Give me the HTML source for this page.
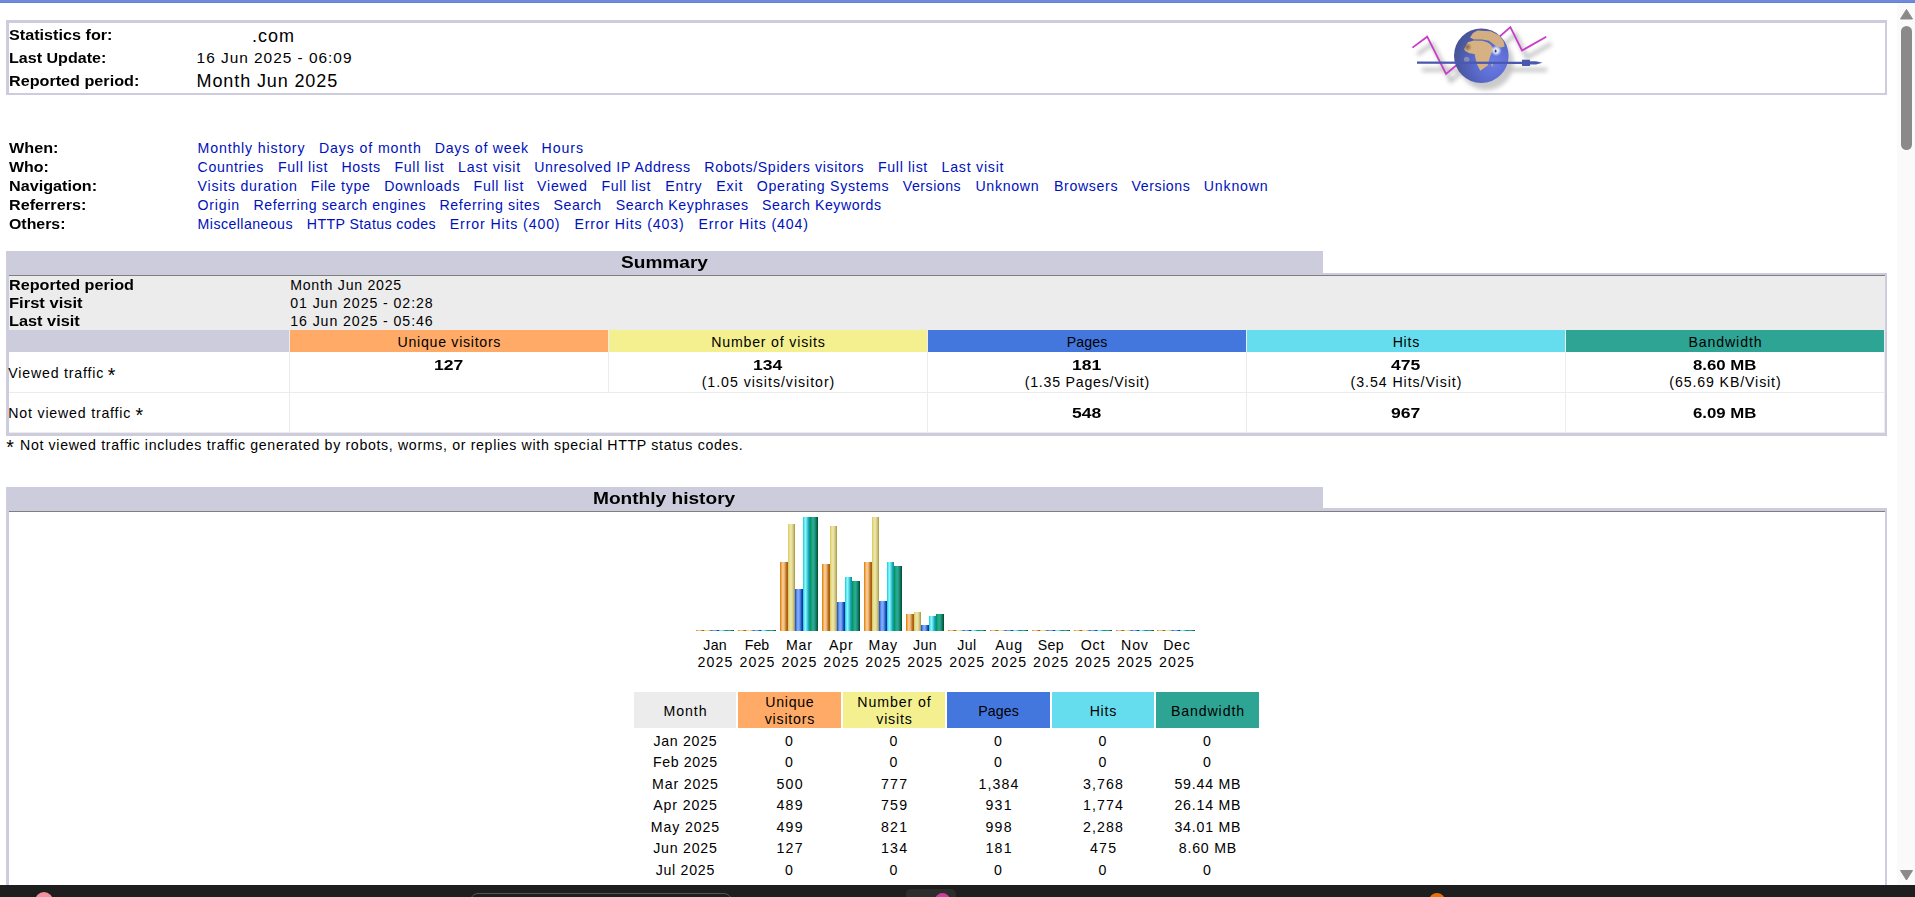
<!DOCTYPE html>
<html><head><meta charset="utf-8"><style>
html,body{margin:0;padding:0;}
body{width:1915px;height:897px;overflow:hidden;position:relative;background:#fff;font-family:"Liberation Sans", sans-serif;color:#000;}
.t{position:absolute;white-space:pre;line-height:0;font-family:"Liberation Sans", sans-serif;transform-origin:0 0;}
.r{position:absolute;}
.bar{position:absolute;}
.bu{background:linear-gradient(90deg,#d27a12 0%,#f2a850 18%,#fdd09a 35%,#eab878 55%,#c57d34 75%,#a45203 90%,#b8701e 100%);}
.bv{background:linear-gradient(90deg,#d6c85a 0%,#eee6a0 30%,#e8e0a4 50%,#d6ce8a 70%,#b4a44a 92%,#a89a48 100%);}
.bp{background:linear-gradient(90deg,#0c48d8 0%,#5a90f8 22%,#88b2ff 38%,#6c98e8 58%,#2a5cc8 78%,#0232a8 92%,#0c3aa0 100%);}
.bh{background:linear-gradient(90deg,#10c8d8 0%,#5cecf4 20%,#88f6fa 35%,#66d8e4 55%,#20b0bc 75%,#0c98a0 92%,#109aa2 100%);}
.bk{background:linear-gradient(90deg,#068a52 0%,#12a878 20%,#30ac98 40%,#249488 60%,#0a7a60 78%,#035a34 92%,#064a30 100%);}
</style></head><body>
<div class="r" style="left:6px;top:20px;width:1881px;height:75px;background:#ccccdd;"></div>
<div class="r" style="left:9px;top:23px;width:1876px;height:70px;background:#ffffff;"></div>
<div class="r" style="left:6px;top:251px;width:1317px;height:22px;background:#ccccdd;"></div>
<div class="r" style="left:6px;top:273px;width:1881px;height:163px;background:#ccccdd;"></div>
<div class="r" style="left:9px;top:275px;width:1876px;height:1px;background:#7f7f7f;"></div>
<div class="r" style="left:9px;top:276px;width:1876px;height:54px;background:#ececec;"></div>
<div class="r" style="left:9px;top:330px;width:1876px;height:103px;background:#ffffff;"></div>
<div class="r" style="left:9px;top:330px;width:280px;height:22px;background:#ccccdd;"></div>
<div class="r" style="left:290px;top:330px;width:318px;height:22px;background:#ffaa66;"></div>
<div class="r" style="left:609px;top:330px;width:318px;height:22px;background:#f4f090;"></div>
<div class="r" style="left:928px;top:330px;width:318px;height:22px;background:#4477dd;"></div>
<div class="r" style="left:1247px;top:330px;width:318px;height:22px;background:#66ddee;"></div>
<div class="r" style="left:1566px;top:330px;width:318px;height:22px;background:#2ea495;"></div>
<div class="r" style="left:9px;top:392px;width:1876px;height:1px;background:#ececec;"></div>
<div class="r" style="left:9px;top:432px;width:1876px;height:1px;background:#ececec;"></div>
<div class="r" style="left:289px;top:352px;width:1px;height:41px;background:#ececec;"></div>
<div class="r" style="left:608px;top:352px;width:1px;height:41px;background:#ececec;"></div>
<div class="r" style="left:927px;top:352px;width:1px;height:41px;background:#ececec;"></div>
<div class="r" style="left:1246px;top:352px;width:1px;height:41px;background:#ececec;"></div>
<div class="r" style="left:1565px;top:352px;width:1px;height:41px;background:#ececec;"></div>
<div class="r" style="left:1884px;top:352px;width:1px;height:41px;background:#ececec;"></div>
<div class="r" style="left:289px;top:393px;width:1px;height:40px;background:#ececec;"></div>
<div class="r" style="left:927px;top:393px;width:1px;height:40px;background:#ececec;"></div>
<div class="r" style="left:1246px;top:393px;width:1px;height:40px;background:#ececec;"></div>
<div class="r" style="left:1565px;top:393px;width:1px;height:40px;background:#ececec;"></div>
<div class="r" style="left:1884px;top:393px;width:1px;height:40px;background:#ececec;"></div>
<div class="r" style="left:289px;top:330px;width:1px;height:22px;background:#ececf0;"></div>
<div class="r" style="left:608px;top:330px;width:1px;height:22px;background:#ececf0;"></div>
<div class="r" style="left:927px;top:330px;width:1px;height:22px;background:#ececf0;"></div>
<div class="r" style="left:1246px;top:330px;width:1px;height:22px;background:#ececf0;"></div>
<div class="r" style="left:1565px;top:330px;width:1px;height:22px;background:#ececf0;"></div>
<div class="r" style="left:1884px;top:330px;width:1px;height:22px;background:#ececf0;"></div>
<div class="r" style="left:6px;top:487px;width:1317px;height:21px;background:#ccccdd;"></div>
<div class="r" style="left:6px;top:508px;width:1881px;height:389px;background:#ccccdd;"></div>
<div class="r" style="left:9px;top:511px;width:1876px;height:1px;background:#7f7f7f;"></div>
<div class="r" style="left:9px;top:512px;width:1876px;height:385px;background:#ffffff;"></div>
<div class="r" style="left:634px;top:692px;width:102px;height:36px;background:#ececec;"></div>
<div class="r" style="left:738px;top:692px;width:103px;height:36px;background:#ffaa66;"></div>
<div class="r" style="left:843px;top:692px;width:102px;height:36px;background:#f4f090;"></div>
<div class="r" style="left:947px;top:692px;width:103px;height:36px;background:#4477dd;"></div>
<div class="r" style="left:1052px;top:692px;width:102px;height:36px;background:#66ddee;"></div>
<div class="r" style="left:1156px;top:692px;width:103px;height:36px;background:#2ea495;"></div>
<div class="bar bu" style="left:696px;top:630px;width:8px;height:1px"></div>
<div class="bar bv" style="left:704px;top:630px;width:7px;height:1px"></div>
<div class="bar bp" style="left:711px;top:630px;width:8px;height:1px"></div>
<div class="bar bh" style="left:719px;top:630px;width:7px;height:1px"></div>
<div class="bar bk" style="left:726px;top:630px;width:8px;height:1px"></div>
<div class="bar bu" style="left:738px;top:630px;width:8px;height:1px"></div>
<div class="bar bv" style="left:746px;top:630px;width:7px;height:1px"></div>
<div class="bar bp" style="left:753px;top:630px;width:8px;height:1px"></div>
<div class="bar bh" style="left:761px;top:630px;width:7px;height:1px"></div>
<div class="bar bk" style="left:768px;top:630px;width:8px;height:1px"></div>
<div class="bar bu" style="left:780px;top:562px;width:8px;height:69px"></div>
<div class="bar bv" style="left:788px;top:524px;width:7px;height:107px"></div>
<div class="bar bp" style="left:795px;top:589px;width:8px;height:42px"></div>
<div class="bar bh" style="left:803px;top:517px;width:7px;height:114px"></div>
<div class="bar bk" style="left:810px;top:517px;width:8px;height:114px"></div>
<div class="bar bu" style="left:822px;top:564px;width:8px;height:67px"></div>
<div class="bar bv" style="left:830px;top:526px;width:7px;height:105px"></div>
<div class="bar bp" style="left:837px;top:602px;width:8px;height:29px"></div>
<div class="bar bh" style="left:845px;top:577px;width:7px;height:54px"></div>
<div class="bar bk" style="left:852px;top:581px;width:8px;height:50px"></div>
<div class="bar bu" style="left:864px;top:562px;width:8px;height:69px"></div>
<div class="bar bv" style="left:872px;top:517px;width:7px;height:114px"></div>
<div class="bar bp" style="left:879px;top:601px;width:8px;height:30px"></div>
<div class="bar bh" style="left:887px;top:562px;width:7px;height:69px"></div>
<div class="bar bk" style="left:894px;top:566px;width:8px;height:65px"></div>
<div class="bar bu" style="left:906px;top:614px;width:8px;height:17px"></div>
<div class="bar bv" style="left:914px;top:612px;width:7px;height:19px"></div>
<div class="bar bp" style="left:921px;top:625px;width:8px;height:6px"></div>
<div class="bar bh" style="left:929px;top:616px;width:7px;height:15px"></div>
<div class="bar bk" style="left:936px;top:614px;width:8px;height:17px"></div>
<div class="bar bu" style="left:948px;top:630px;width:8px;height:1px"></div>
<div class="bar bv" style="left:956px;top:630px;width:7px;height:1px"></div>
<div class="bar bp" style="left:963px;top:630px;width:8px;height:1px"></div>
<div class="bar bh" style="left:971px;top:630px;width:7px;height:1px"></div>
<div class="bar bk" style="left:978px;top:630px;width:8px;height:1px"></div>
<div class="bar bu" style="left:990px;top:630px;width:8px;height:1px"></div>
<div class="bar bv" style="left:998px;top:630px;width:7px;height:1px"></div>
<div class="bar bp" style="left:1005px;top:630px;width:8px;height:1px"></div>
<div class="bar bh" style="left:1013px;top:630px;width:7px;height:1px"></div>
<div class="bar bk" style="left:1020px;top:630px;width:8px;height:1px"></div>
<div class="bar bu" style="left:1032px;top:630px;width:8px;height:1px"></div>
<div class="bar bv" style="left:1040px;top:630px;width:7px;height:1px"></div>
<div class="bar bp" style="left:1047px;top:630px;width:8px;height:1px"></div>
<div class="bar bh" style="left:1055px;top:630px;width:7px;height:1px"></div>
<div class="bar bk" style="left:1062px;top:630px;width:8px;height:1px"></div>
<div class="bar bu" style="left:1074px;top:630px;width:8px;height:1px"></div>
<div class="bar bv" style="left:1082px;top:630px;width:7px;height:1px"></div>
<div class="bar bp" style="left:1089px;top:630px;width:8px;height:1px"></div>
<div class="bar bh" style="left:1097px;top:630px;width:7px;height:1px"></div>
<div class="bar bk" style="left:1104px;top:630px;width:8px;height:1px"></div>
<div class="bar bu" style="left:1116px;top:630px;width:8px;height:1px"></div>
<div class="bar bv" style="left:1124px;top:630px;width:7px;height:1px"></div>
<div class="bar bp" style="left:1131px;top:630px;width:8px;height:1px"></div>
<div class="bar bh" style="left:1139px;top:630px;width:7px;height:1px"></div>
<div class="bar bk" style="left:1146px;top:630px;width:8px;height:1px"></div>
<div class="bar bu" style="left:1157px;top:630px;width:8px;height:1px"></div>
<div class="bar bv" style="left:1165px;top:630px;width:7px;height:1px"></div>
<div class="bar bp" style="left:1172px;top:630px;width:8px;height:1px"></div>
<div class="bar bh" style="left:1180px;top:630px;width:7px;height:1px"></div>
<div class="bar bk" style="left:1187px;top:630px;width:8px;height:1px"></div>
<div class="t" style="left:8.50px;top:35.02px;font-size:14.16px;letter-spacing:0.000px;transform:scaleX(1.1440);font-weight:bold">Statistics for:</div>
<div class="t" style="left:8.50px;top:58.02px;font-size:14.16px;letter-spacing:0.000px;transform:scaleX(1.1349);font-weight:bold">Last Update:</div>
<div class="t" style="left:8.50px;top:81.02px;font-size:14.16px;letter-spacing:0.000px;transform:scaleX(1.1425);font-weight:bold">Reported period:</div>
<div class="t" style="left:251.90px;top:35.98px;font-size:18.03px;letter-spacing:1.018px">.com</div>
<div class="t" style="left:196.60px;top:58.02px;font-size:15.45px;letter-spacing:0.975px">16 Jun 2025 - 06:09</div>
<div class="t" style="left:196.60px;top:80.98px;font-size:18.03px;letter-spacing:0.875px">Month Jun 2025</div>
<div class="t" style="left:8.50px;top:148.02px;font-size:14.16px;letter-spacing:0.000px;transform:scaleX(1.1422);font-weight:bold">When:</div>
<div class="t" style="left:8.50px;top:167.02px;font-size:14.16px;letter-spacing:0.000px;transform:scaleX(1.1281);font-weight:bold">Who:</div>
<div class="t" style="left:8.50px;top:186.02px;font-size:14.16px;letter-spacing:0.000px;transform:scaleX(1.1428);font-weight:bold">Navigation:</div>
<div class="t" style="left:8.50px;top:205.02px;font-size:14.16px;letter-spacing:0.000px;transform:scaleX(1.1423);font-weight:bold">Referrers:</div>
<div class="t" style="left:8.50px;top:224.02px;font-size:14.16px;letter-spacing:0.000px;transform:scaleX(1.1223);font-weight:bold">Others:</div>
<div class="t" style="left:197.60px;top:148.02px;font-size:14.16px;letter-spacing:0.835px;color:#0011bb">Monthly history</div>
<div class="t" style="left:318.90px;top:148.02px;font-size:14.16px;letter-spacing:0.885px;color:#0011bb">Days of month</div>
<div class="t" style="left:434.70px;top:148.02px;font-size:14.16px;letter-spacing:0.774px;color:#0011bb">Days of week</div>
<div class="t" style="left:541.50px;top:148.02px;font-size:14.16px;letter-spacing:0.934px;color:#0011bb">Hours</div>
<div class="t" style="left:197.60px;top:167.02px;font-size:14.16px;letter-spacing:0.638px;color:#0011bb">Countries</div>
<div class="t" style="left:277.90px;top:167.02px;font-size:14.16px;letter-spacing:0.694px;color:#0011bb">Full list</div>
<div class="t" style="left:341.50px;top:167.02px;font-size:14.16px;letter-spacing:0.628px;color:#0011bb">Hosts</div>
<div class="t" style="left:394.50px;top:167.02px;font-size:14.16px;letter-spacing:0.657px;color:#0011bb">Full list</div>
<div class="t" style="left:458.10px;top:167.02px;font-size:14.16px;letter-spacing:0.769px;color:#0011bb">Last visit</div>
<div class="t" style="left:534.20px;top:167.02px;font-size:14.16px;letter-spacing:0.602px;color:#0011bb">Unresolved IP Address</div>
<div class="t" style="left:704.30px;top:167.02px;font-size:14.16px;letter-spacing:0.665px;color:#0011bb">Robots/Spiders visitors</div>
<div class="t" style="left:878.00px;top:167.02px;font-size:14.16px;letter-spacing:0.657px;color:#0011bb">Full list</div>
<div class="t" style="left:941.50px;top:167.02px;font-size:14.16px;letter-spacing:0.769px;color:#0011bb">Last visit</div>
<div class="t" style="left:197.60px;top:186.02px;font-size:14.16px;letter-spacing:0.760px;color:#0011bb">Visits duration</div>
<div class="t" style="left:310.80px;top:186.02px;font-size:14.16px;letter-spacing:0.698px;color:#0011bb">File type</div>
<div class="t" style="left:384.20px;top:186.02px;font-size:14.16px;letter-spacing:0.657px;color:#0011bb">Downloads</div>
<div class="t" style="left:473.50px;top:186.02px;font-size:14.16px;letter-spacing:0.732px;color:#0011bb">Full list</div>
<div class="t" style="left:537.10px;top:186.02px;font-size:14.16px;letter-spacing:0.742px;color:#0011bb">Viewed</div>
<div class="t" style="left:601.50px;top:186.02px;font-size:14.16px;letter-spacing:0.607px;color:#0011bb">Full list</div>
<div class="t" style="left:665.20px;top:186.02px;font-size:14.16px;letter-spacing:0.863px;color:#0011bb">Entry</div>
<div class="t" style="left:716.30px;top:186.02px;font-size:14.16px;letter-spacing:0.864px;color:#0011bb">Exit</div>
<div class="t" style="left:756.80px;top:186.02px;font-size:14.16px;letter-spacing:0.719px;color:#0011bb">Operating Systems</div>
<div class="t" style="left:902.70px;top:186.02px;font-size:14.16px;letter-spacing:0.529px;color:#0011bb">Versions</div>
<div class="t" style="left:975.40px;top:186.02px;font-size:14.16px;letter-spacing:0.711px;color:#0011bb">Unknown</div>
<div class="t" style="left:1053.90px;top:186.02px;font-size:14.16px;letter-spacing:0.671px;color:#0011bb">Browsers</div>
<div class="t" style="left:1131.60px;top:186.02px;font-size:14.16px;letter-spacing:0.558px;color:#0011bb">Versions</div>
<div class="t" style="left:1203.80px;top:186.02px;font-size:14.16px;letter-spacing:0.811px;color:#0011bb">Unknown</div>
<div class="t" style="left:197.60px;top:205.02px;font-size:14.16px;letter-spacing:0.767px;color:#0011bb">Origin</div>
<div class="t" style="left:253.50px;top:205.02px;font-size:14.16px;letter-spacing:0.601px;color:#0011bb">Referring search engines</div>
<div class="t" style="left:439.50px;top:205.02px;font-size:14.16px;letter-spacing:0.631px;color:#0011bb">Referring sites</div>
<div class="t" style="left:553.50px;top:205.02px;font-size:14.16px;letter-spacing:0.568px;color:#0011bb">Search</div>
<div class="t" style="left:615.80px;top:205.02px;font-size:14.16px;letter-spacing:0.541px;color:#0011bb">Search Keyphrases</div>
<div class="t" style="left:762.10px;top:205.02px;font-size:14.16px;letter-spacing:0.575px;color:#0011bb">Search Keywords</div>
<div class="t" style="left:197.60px;top:224.02px;font-size:14.16px;letter-spacing:0.433px;color:#0011bb">Miscellaneous</div>
<div class="t" style="left:306.80px;top:224.02px;font-size:14.16px;letter-spacing:0.401px;color:#0011bb">HTTP Status codes</div>
<div class="t" style="left:449.80px;top:224.02px;font-size:14.16px;letter-spacing:0.869px;color:#0011bb">Error Hits (400)</div>
<div class="t" style="left:574.40px;top:224.02px;font-size:14.16px;letter-spacing:0.836px;color:#0011bb">Error Hits (403)</div>
<div class="t" style="left:698.50px;top:224.02px;font-size:14.16px;letter-spacing:0.849px;color:#0011bb">Error Hits (404)</div>
<div class="t" style="left:620.90px;top:263.05px;font-size:16.74px;letter-spacing:0.000px;transform:scaleX(1.1405);font-weight:bold">Summary</div>
<div class="t" style="left:8.50px;top:285.02px;font-size:14.16px;letter-spacing:0.000px;transform:scaleX(1.1433);font-weight:bold">Reported period</div>
<div class="t" style="left:8.50px;top:303.02px;font-size:14.16px;letter-spacing:0.000px;transform:scaleX(1.1691);font-weight:bold">First visit</div>
<div class="t" style="left:8.50px;top:321.02px;font-size:14.16px;letter-spacing:0.000px;transform:scaleX(1.1525);font-weight:bold">Last visit</div>
<div class="t" style="left:290.20px;top:285.02px;font-size:14.16px;letter-spacing:0.728px">Month Jun 2025</div>
<div class="t" style="left:290.20px;top:303.02px;font-size:14.16px;letter-spacing:0.920px">01 Jun 2025 - 02:28</div>
<div class="t" style="left:290.20px;top:321.02px;font-size:14.16px;letter-spacing:0.920px">16 Jun 2025 - 05:46</div>
<div class="t" style="left:397.55px;top:342.02px;font-size:14.16px;letter-spacing:0.719px">Unique visitors</div>
<div class="t" style="left:711.17px;top:342.02px;font-size:14.16px;letter-spacing:0.812px">Number of visits</div>
<div class="t" style="left:1066.77px;top:342.02px;font-size:14.16px;letter-spacing:0.078px">Pages</div>
<div class="t" style="left:1392.64px;top:342.02px;font-size:14.16px;letter-spacing:0.776px">Hits</div>
<div class="t" style="left:1688.40px;top:342.02px;font-size:14.16px;letter-spacing:0.887px">Bandwidth</div>
<div class="t" style="left:8.30px;top:373.02px;font-size:14.16px;letter-spacing:0.810px">Viewed traffic</div>
<div class="t" style="left:107.80px;top:375.22px;font-size:19.57px;letter-spacing:0.000px">*</div>
<div class="t" style="left:8.30px;top:413.02px;font-size:14.16px;letter-spacing:0.810px">Not viewed traffic</div>
<div class="t" style="left:135.40px;top:415.22px;font-size:19.57px;letter-spacing:0.000px">*</div>
<div class="t" style="left:434.34px;top:365.02px;font-size:14.16px;letter-spacing:0.000px;transform:scaleX(1.2411);font-weight:bold">127</div>
<div class="t" style="left:753.34px;top:365.02px;font-size:14.16px;letter-spacing:0.000px;transform:scaleX(1.2411);font-weight:bold">134</div>
<div class="t" style="left:1072.34px;top:365.02px;font-size:14.16px;letter-spacing:0.000px;transform:scaleX(1.2411);font-weight:bold">181</div>
<div class="t" style="left:1391.34px;top:365.02px;font-size:14.16px;letter-spacing:0.000px;transform:scaleX(1.2411);font-weight:bold">475</div>
<div class="t" style="left:1693.25px;top:365.02px;font-size:14.16px;letter-spacing:0.000px;transform:scaleX(1.1867);font-weight:bold">8.60 MB</div>
<div class="t" style="left:701.64px;top:382.02px;font-size:14.16px;letter-spacing:0.972px">(1.05 visits/visitor)</div>
<div class="t" style="left:1024.71px;top:382.02px;font-size:14.16px;letter-spacing:0.770px">(1.35 Pages/Visit)</div>
<div class="t" style="left:1350.58px;top:382.02px;font-size:14.16px;letter-spacing:0.945px">(3.54 Hits/Visit)</div>
<div class="t" style="left:1669.34px;top:382.02px;font-size:14.16px;letter-spacing:0.882px">(65.69 KB/Visit)</div>
<div class="t" style="left:1072.34px;top:413.02px;font-size:14.16px;letter-spacing:0.000px;transform:scaleX(1.2411);font-weight:bold">548</div>
<div class="t" style="left:1391.34px;top:413.02px;font-size:14.16px;letter-spacing:0.000px;transform:scaleX(1.2411);font-weight:bold">967</div>
<div class="t" style="left:1693.25px;top:413.02px;font-size:14.16px;letter-spacing:0.000px;transform:scaleX(1.1867);font-weight:bold">6.09 MB</div>
<div class="t" style="left:6.20px;top:447.22px;font-size:19.57px;letter-spacing:0.000px">*</div>
<div class="t" style="left:20.00px;top:445.02px;font-size:14.16px;letter-spacing:0.663px">Not viewed traffic includes traffic generated by robots, worms, or replies with special HTTP status codes.</div>
<div class="t" style="left:593.40px;top:499.05px;font-size:16.74px;letter-spacing:0.000px;transform:scaleX(1.1415);font-weight:bold">Monthly history</div>
<div class="t" style="left:703.30px;top:645.02px;font-size:14.16px;letter-spacing:0.287px">Jan</div>
<div class="t" style="left:697.50px;top:662.02px;font-size:14.16px;letter-spacing:1.167px">2025</div>
<div class="t" style="left:744.77px;top:645.02px;font-size:14.16px;letter-spacing:-0.023px">Feb</div>
<div class="t" style="left:739.45px;top:662.02px;font-size:14.16px;letter-spacing:1.167px">2025</div>
<div class="t" style="left:785.92px;top:645.02px;font-size:14.16px;letter-spacing:0.781px">Mar</div>
<div class="t" style="left:781.40px;top:662.02px;font-size:14.16px;letter-spacing:1.167px">2025</div>
<div class="t" style="left:828.95px;top:645.02px;font-size:14.16px;letter-spacing:0.883px">Apr</div>
<div class="t" style="left:823.35px;top:662.02px;font-size:14.16px;letter-spacing:1.167px">2025</div>
<div class="t" style="left:868.58px;top:645.02px;font-size:14.16px;letter-spacing:0.844px">May</div>
<div class="t" style="left:865.30px;top:662.02px;font-size:14.16px;letter-spacing:1.167px">2025</div>
<div class="t" style="left:912.91px;top:645.02px;font-size:14.16px;letter-spacing:0.428px">Jun</div>
<div class="t" style="left:907.25px;top:662.02px;font-size:14.16px;letter-spacing:1.167px">2025</div>
<div class="t" style="left:957.30px;top:645.02px;font-size:14.16px;letter-spacing:0.342px">Jul</div>
<div class="t" style="left:949.20px;top:662.02px;font-size:14.16px;letter-spacing:1.167px">2025</div>
<div class="t" style="left:995.22px;top:645.02px;font-size:14.16px;letter-spacing:0.828px">Aug</div>
<div class="t" style="left:991.15px;top:662.02px;font-size:14.16px;letter-spacing:1.167px">2025</div>
<div class="t" style="left:1037.64px;top:645.02px;font-size:14.16px;letter-spacing:0.359px">Sep</div>
<div class="t" style="left:1033.10px;top:662.02px;font-size:14.16px;letter-spacing:1.167px">2025</div>
<div class="t" style="left:1080.66px;top:645.02px;font-size:14.16px;letter-spacing:0.875px">Oct</div>
<div class="t" style="left:1075.05px;top:662.02px;font-size:14.16px;letter-spacing:1.167px">2025</div>
<div class="t" style="left:1121.08px;top:645.02px;font-size:14.16px;letter-spacing:0.828px">Nov</div>
<div class="t" style="left:1117.00px;top:662.02px;font-size:14.16px;letter-spacing:1.167px">2025</div>
<div class="t" style="left:1163.15px;top:645.02px;font-size:14.16px;letter-spacing:0.711px">Dec</div>
<div class="t" style="left:1158.95px;top:662.02px;font-size:14.16px;letter-spacing:1.167px">2025</div>
<div class="t" style="left:663.45px;top:711.02px;font-size:14.16px;letter-spacing:0.938px">Month</div>
<div class="t" style="left:765.24px;top:702.02px;font-size:14.16px;letter-spacing:0.728px">Unique</div>
<div class="t" style="left:764.72px;top:719.02px;font-size:14.16px;letter-spacing:0.788px">visitors</div>
<div class="t" style="left:857.34px;top:702.02px;font-size:14.16px;letter-spacing:0.904px">Number of</div>
<div class="t" style="left:876.25px;top:719.02px;font-size:14.16px;letter-spacing:0.806px">visits</div>
<div class="t" style="left:978.27px;top:711.02px;font-size:14.16px;letter-spacing:0.078px">Pages</div>
<div class="t" style="left:1089.64px;top:711.02px;font-size:14.16px;letter-spacing:0.776px">Hits</div>
<div class="t" style="left:1170.90px;top:711.02px;font-size:14.16px;letter-spacing:0.887px">Bandwidth</div>
<div class="t" style="left:653.38px;top:741.02px;font-size:14.16px;letter-spacing:0.711px">Jan 2025</div>
<div class="t" style="left:785.12px;top:741.02px;font-size:14.16px;letter-spacing:0.000px">0</div>
<div class="t" style="left:889.62px;top:741.02px;font-size:14.16px;letter-spacing:0.000px">0</div>
<div class="t" style="left:994.12px;top:741.02px;font-size:14.16px;letter-spacing:0.000px">0</div>
<div class="t" style="left:1098.62px;top:741.02px;font-size:14.16px;letter-spacing:0.000px">0</div>
<div class="t" style="left:1203.12px;top:741.02px;font-size:14.16px;letter-spacing:0.000px">0</div>
<div class="t" style="left:652.91px;top:762.02px;font-size:14.16px;letter-spacing:0.623px">Feb 2025</div>
<div class="t" style="left:785.12px;top:762.02px;font-size:14.16px;letter-spacing:0.000px">0</div>
<div class="t" style="left:889.62px;top:762.02px;font-size:14.16px;letter-spacing:0.000px">0</div>
<div class="t" style="left:994.12px;top:762.02px;font-size:14.16px;letter-spacing:0.000px">0</div>
<div class="t" style="left:1098.62px;top:762.02px;font-size:14.16px;letter-spacing:0.000px">0</div>
<div class="t" style="left:1203.12px;top:762.02px;font-size:14.16px;letter-spacing:0.000px">0</div>
<div class="t" style="left:652.11px;top:784.02px;font-size:14.16px;letter-spacing:0.853px">Mar 2025</div>
<div class="t" style="left:776.38px;top:784.02px;font-size:14.16px;letter-spacing:1.312px">500</div>
<div class="t" style="left:880.88px;top:784.02px;font-size:14.16px;letter-spacing:1.312px">777</div>
<div class="t" style="left:978.50px;top:784.02px;font-size:14.16px;letter-spacing:1.143px">1,384</div>
<div class="t" style="left:1083.00px;top:784.02px;font-size:14.16px;letter-spacing:1.143px">3,768</div>
<div class="t" style="left:1174.43px;top:784.02px;font-size:14.16px;letter-spacing:0.791px">59.44 MB</div>
<div class="t" style="left:653.19px;top:805.02px;font-size:14.16px;letter-spacing:0.879px">Apr 2025</div>
<div class="t" style="left:776.38px;top:805.02px;font-size:14.16px;letter-spacing:1.312px">489</div>
<div class="t" style="left:880.88px;top:805.02px;font-size:14.16px;letter-spacing:1.312px">759</div>
<div class="t" style="left:985.38px;top:805.02px;font-size:14.16px;letter-spacing:1.312px">931</div>
<div class="t" style="left:1083.00px;top:805.02px;font-size:14.16px;letter-spacing:1.143px">1,774</div>
<div class="t" style="left:1174.43px;top:805.02px;font-size:14.16px;letter-spacing:0.791px">26.14 MB</div>
<div class="t" style="left:650.87px;top:827.02px;font-size:14.16px;letter-spacing:0.870px">May 2025</div>
<div class="t" style="left:776.38px;top:827.02px;font-size:14.16px;letter-spacing:1.312px">499</div>
<div class="t" style="left:880.88px;top:827.02px;font-size:14.16px;letter-spacing:1.312px">821</div>
<div class="t" style="left:985.38px;top:827.02px;font-size:14.16px;letter-spacing:1.312px">998</div>
<div class="t" style="left:1083.00px;top:827.02px;font-size:14.16px;letter-spacing:1.143px">2,288</div>
<div class="t" style="left:1174.43px;top:827.02px;font-size:14.16px;letter-spacing:0.791px">34.01 MB</div>
<div class="t" style="left:653.24px;top:848.02px;font-size:14.16px;letter-spacing:0.754px">Jun 2025</div>
<div class="t" style="left:776.38px;top:848.02px;font-size:14.16px;letter-spacing:1.312px">127</div>
<div class="t" style="left:880.88px;top:848.02px;font-size:14.16px;letter-spacing:1.312px">134</div>
<div class="t" style="left:985.38px;top:848.02px;font-size:14.16px;letter-spacing:1.312px">181</div>
<div class="t" style="left:1089.88px;top:848.02px;font-size:14.16px;letter-spacing:1.312px">475</div>
<div class="t" style="left:1178.80px;top:848.02px;font-size:14.16px;letter-spacing:0.777px">8.60 MB</div>
<div class="t" style="left:655.68px;top:870.02px;font-size:14.16px;letter-spacing:0.729px">Jul 2025</div>
<div class="t" style="left:785.12px;top:870.02px;font-size:14.16px;letter-spacing:0.000px">0</div>
<div class="t" style="left:889.62px;top:870.02px;font-size:14.16px;letter-spacing:0.000px">0</div>
<div class="t" style="left:994.12px;top:870.02px;font-size:14.16px;letter-spacing:0.000px">0</div>
<div class="t" style="left:1098.62px;top:870.02px;font-size:14.16px;letter-spacing:0.000px">0</div>
<div class="t" style="left:1203.12px;top:870.02px;font-size:14.16px;letter-spacing:0.000px">0</div>
<svg style="position:absolute;left:1400px;top:20px" width="160" height="75" viewBox="1400 20 160 75">
<defs>
<filter id="sh" x="-30%" y="-30%" width="160%" height="160%"><feGaussianBlur stdDeviation="2.2"/></filter>
<filter id="bl1"><feGaussianBlur stdDeviation="0.6"/></filter>
<radialGradient id="gl" cx="0.72" cy="0.62" r="0.8">
<stop offset="0" stop-color="#6c7ee8"/><stop offset="0.4" stop-color="#5a6cd0"/><stop offset="0.75" stop-color="#4c5aa8"/><stop offset="1" stop-color="#45508e"/></radialGradient>
<radialGradient id="hl" cx="0.5" cy="0.5" r="0.5">
<stop offset="0" stop-color="#ffffff" stop-opacity="1"/><stop offset="0.5" stop-color="#e8f0ff" stop-opacity="0.8"/><stop offset="1" stop-color="#a0b0ff" stop-opacity="0"/></radialGradient>
<radialGradient id="br" cx="0.5" cy="0.5" r="0.5">
<stop offset="0" stop-color="#7a6240" stop-opacity="0.9"/><stop offset="1" stop-color="#7a6240" stop-opacity="0"/></radialGradient>
</defs>
<g filter="url(#sh)" opacity="0.34" transform="translate(5,7)">
<polyline points="1412.5,47.6 1427.2,36.7 1446,73.9 1458,64 1500,37 1510.4,27.1 1522,50.5 1546.3,36.7" fill="none" stroke="#444" stroke-width="3.5"/>
<circle cx="1481.3" cy="55.8" r="27.3" fill="#666"/>
<line x1="1417" y1="62.7" x2="1542" y2="62.8" stroke="#444" stroke-width="3.5"/>
</g>
<polyline points="1412.5,47.6 1427.2,36.7 1446,73.9 1458,64" fill="none" stroke="#c83cc8" stroke-width="1.8"/>
<polyline points="1498,38 1510.4,27.1 1522,50.5 1546.3,36.7" fill="none" stroke="#c83cc8" stroke-width="1.8"/>
<circle cx="1481.3" cy="55.8" r="27.3" fill="url(#gl)"/>
<g filter="url(#bl1)">
<path d="M1464.1,48.9 L1467.8,42.2 L1473.9,40.6 L1482.6,40.8 L1487.7,42.4 L1490.6,44.6 L1493.5,48.9 L1491,54 L1489.5,58.3 L1487.7,65.6 L1480.4,70.7 L1476.8,64.1 L1474.6,54 L1469.6,53.3 L1465.2,51.1 Z" fill="#d6b282"/>
<path d="M1470,37.5 L1473,33 L1477.5,30.6 L1490.6,31.2 L1499.3,35.5 L1503.6,41.2 L1504.6,46.5 L1501,47.5 L1496.5,46.5 L1492.5,43.5 L1489,40.8 L1482,39.4 L1474,39.6 Z" fill="#d2ae80"/>
<path d="M1491,65 L1493,62.5 L1492.5,67 Z" fill="#d2ae80"/>
</g>
<circle cx="1467.5" cy="47" r="4.5" fill="url(#br)"/>
<circle cx="1466.7" cy="59.5" r="2.8" fill="#9aa0b8" opacity="0.7" filter="url(#bl1)"/>
<circle cx="1496.2" cy="50.6" r="5.8" fill="url(#hl)"/>
<ellipse cx="1495.6" cy="51" rx="1" ry="1.6" fill="#404050"/>
<line x1="1417" y1="62.7" x2="1536" y2="62.8" stroke="#4a58b0" stroke-width="2.2"/>
<rect x="1522" y="59.7" width="8" height="6.3" fill="#4a58b0"/>
<path d="M1530,61.2 L1536,61.2 L1542.5,62.7 L1536,64.4 L1530,64.4 Z" fill="#4a58b0"/>
</svg>

<div style="position:absolute;left:0;top:0;width:1915px;height:2px;background:#6f89dd"></div>
<div style="position:absolute;left:0;top:2px;width:1915px;height:1px;background:#6680da"></div>
<div style="position:absolute;left:1897px;top:3px;width:18px;height:882px;background:#fafafa"></div>
<div style="position:absolute;left:1901px;top:26px;width:11px;height:124px;background:#8a8a8a;border-radius:5.5px"></div>
<svg style="position:absolute;left:1897px;top:5px" width="18" height="20"><path d="M3.5,14 L9.5,4.5 L15.5,14 Z" fill="#8a8a8a" stroke="#8a8a8a" stroke-width="1" stroke-linejoin="round"/></svg>
<svg style="position:absolute;left:1897px;top:866px" width="18" height="18"><path d="M3.5,4.5 L15.5,4.5 L9.5,14 Z" fill="#8a8a8a" stroke="#8a8a8a" stroke-width="1" stroke-linejoin="round"/></svg>
<div style="position:absolute;left:0;top:885px;width:1915px;height:12px;background:#1e1e1e"></div>
<div style="position:absolute;left:35px;top:892px;width:18px;height:18px;border-radius:9px;background:#f4909c"></div>
<div style="position:absolute;left:470px;top:893px;width:262px;height:20px;border-radius:8px;border:1px solid #555;box-sizing:border-box"></div>
<div style="position:absolute;left:906px;top:889px;width:50px;height:20px;border-radius:5px;background:#2c2c2c"></div>
<div style="position:absolute;left:935px;top:893px;width:15px;height:15px;border-radius:8px;background:#c8409c"></div>
<div style="position:absolute;left:1429px;top:893px;width:16px;height:16px;border-radius:8px;background:#e8700a"></div>

</body></html>
